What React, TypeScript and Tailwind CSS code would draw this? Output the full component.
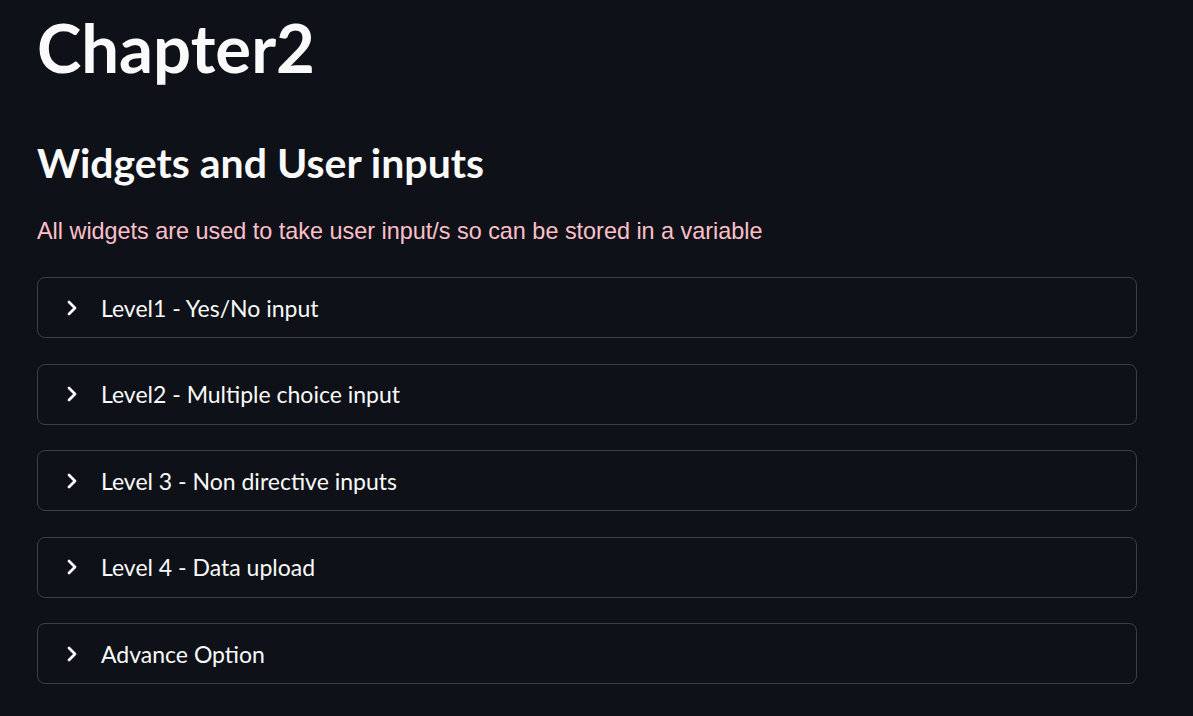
import { ChevronRight } from 'lucide-react';

const levels = [
  'Level1 - Yes/No input',
  'Level2 - Multiple choice input',
  'Level 3 - Non directive inputs',
  'Level 4 - Data upload',
  'Advance Option',
];

function Expander({ label }: { label: string }) {
  return (
    <div className="h-[61px] w-[1100px] rounded-lg border border-[#3d3f45] flex items-center pl-[22px]">
      <ChevronRight className="w-6 h-6 text-[#fafafa]" strokeWidth={2.75} />
      <span className="ml-[17px] text-[23px] text-[#fafafa]">{label}</span>
    </div>
  );
}

export default function App() {
  return (
    <div className="min-h-screen bg-[#0e1117] font-['Lato',sans-serif] px-[37px] overflow-hidden">
      <h1 className="text-[67px] font-bold leading-none text-[#fafafa] pt-[14px]">Chapter2</h1>
      <h2 className="text-[41px] font-bold leading-none text-[#fafafa] mt-[61px]">Widgets and User inputs</h2>
      <p className="font-['Liberation_Sans',Arial,sans-serif] text-[23.4px] text-[#ffc0cb] mt-[37px] leading-none">
        All widgets are used to take user input/s so can be stored in a variable
      </p>
      <div className="flex flex-col gap-[25.5px] mt-[34px]">
        {levels.map((l) => (
          <Expander key={l} label={l} />
        ))}
      </div>
    </div>
  );
}
